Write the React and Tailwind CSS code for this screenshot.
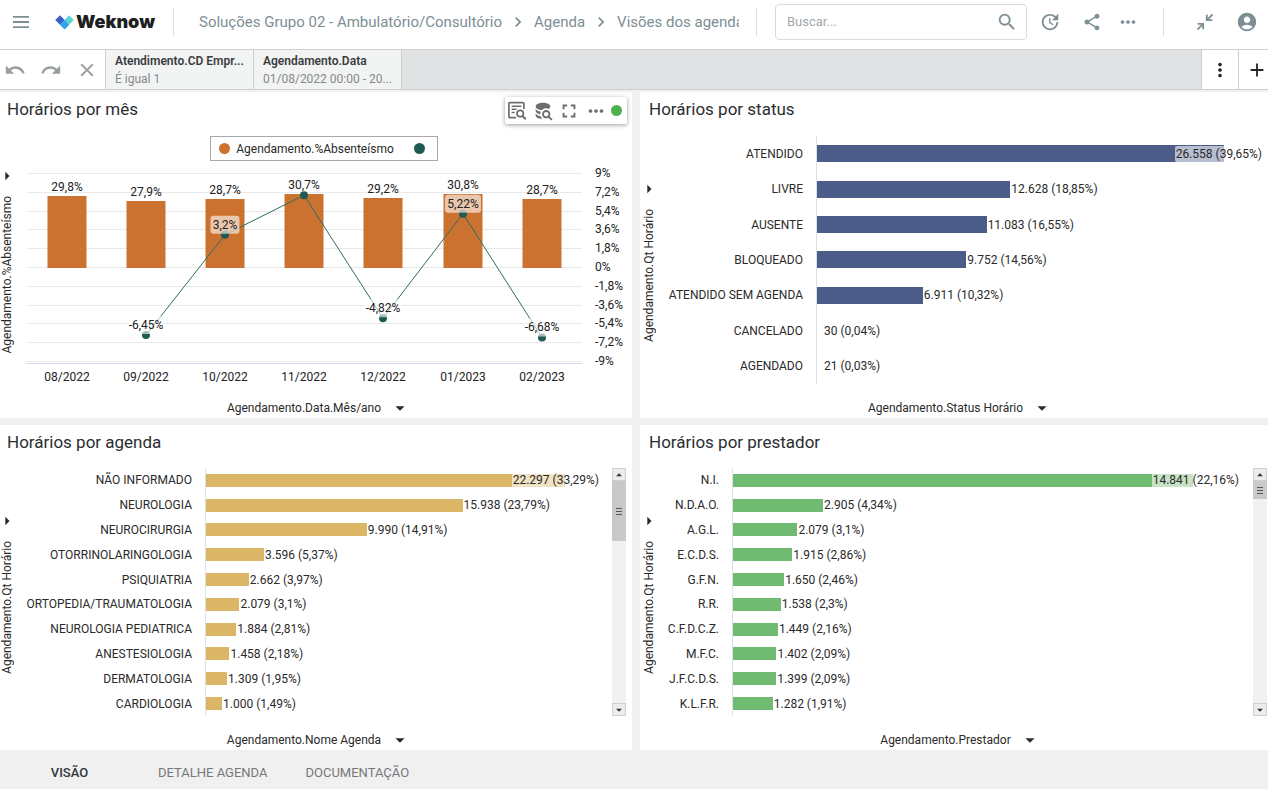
import React from "react";
import {
  MdUpdate, MdShare, MdMoreHoriz, MdMoreVert, MdSearch, MdAccountCircle,
  MdUndo, MdRedo, MdClose, MdAdd, MdFullscreen, MdKeyboardArrowRight,
  MdArrowDropDown, MdArrowDropUp,
} from "react-icons/md";

const statusRows = [
  { name: "ATENDIDO", value: 26558, label: "26.558 (39,65%)" },
  { name: "LIVRE", value: 12628, label: "12.628 (18,85%)" },
  { name: "AUSENTE", value: 11083, label: "11.083 (16,55%)" },
  { name: "BLOQUEADO", value: 9752, label: "9.752 (14,56%)" },
  { name: "ATENDIDO SEM AGENDA", value: 6911, label: "6.911 (10,32%)" },
  { name: "CANCELADO", value: 30, label: "30 (0,04%)" },
  { name: "AGENDADO", value: 21, label: "21 (0,03%)" },
];

const agendaRows = [
  { name: "NÃO INFORMADO", value: 22297, label: "22.297 (33,29%)" },
  { name: "NEUROLOGIA", value: 15938, label: "15.938 (23,79%)" },
  { name: "NEUROCIRURGIA", value: 9990, label: "9.990 (14,91%)" },
  { name: "OTORRINOLARINGOLOGIA", value: 3596, label: "3.596 (5,37%)" },
  { name: "PSIQUIATRIA", value: 2662, label: "2.662 (3,97%)" },
  { name: "ORTOPEDIA/TRAUMATOLOGIA", value: 2079, label: "2.079 (3,1%)" },
  { name: "NEUROLOGIA PEDIATRICA", value: 1884, label: "1.884 (2,81%)" },
  { name: "ANESTESIOLOGIA", value: 1458, label: "1.458 (2,18%)" },
  { name: "DERMATOLOGIA", value: 1309, label: "1.309 (1,95%)" },
  { name: "CARDIOLOGIA", value: 1000, label: "1.000 (1,49%)" },
];

const prestadorRows = [
  { name: "N.I.", value: 14841, label: "14.841 (22,16%)" },
  { name: "N.D.A.O.", value: 2905, label: "2.905 (4,34%)" },
  { name: "A.G.L.", value: 2079, label: "2.079 (3,1%)" },
  { name: "E.C.D.S.", value: 1915, label: "1.915 (2,86%)" },
  { name: "G.F.N.", value: 1650, label: "1.650 (2,46%)" },
  { name: "R.R.", value: 1538, label: "1.538 (2,3%)" },
  { name: "C.F.D.C.Z.", value: 1449, label: "1.449 (2,16%)" },
  { name: "M.F.C.", value: 1402, label: "1.402 (2,09%)" },
  { name: "J.F.C.D.S.", value: 1399, label: "1.399 (2,09%)" },
  { name: "K.L.F.R.", value: 1282, label: "1.282 (1,91%)" },
];

const months = [
  { name: "08/2022", bar: 29.8, barLabel: "29,8%" },
  { name: "09/2022", bar: 27.9, barLabel: "27,9%", line: -6.45, lineLabel: "-6,45%" },
  { name: "10/2022", bar: 28.7, barLabel: "28,7%", line: 3.2, lineLabel: "3,2%" },
  { name: "11/2022", bar: 30.7, barLabel: "30,7%", line: 7 },
  { name: "12/2022", bar: 29.2, barLabel: "29,2%", line: -4.82, lineLabel: "-4,82%" },
  { name: "01/2023", bar: 30.8, barLabel: "30,8%", line: 5.22, lineLabel: "5,22%" },
  { name: "02/2023", bar: 28.7, barLabel: "28,7%", line: -6.68, lineLabel: "-6,68%" },
];

const ticks = ["9%", "7,2%", "5,4%", "3,6%", "1,8%", "0%", "-1,8%", "-3,6%", "-5,4%", "-7,2%", "-9%"];

function Logo() {
  return (
    <a href="#inicio" className="flex items-center gap-[2px] text-[#1d1f22]" aria-label="Weknow">
      <svg viewBox="0 0 19 15" className="h-[15px] w-[19px]" aria-hidden="true">
        <path d="M5 0.3 9.6 5 5 9.7 0.2 5Z" fill="#3a5fc6" />
        <path d="M14.1 0.3 18.8 5 14.1 9.7 9.5 5Z" fill="#5ad5d6" />
        <path d="M9.6 5 14.2 9.7 9.6 14.4 5 9.7Z" fill="#2e9fe6" />
        <path d="M9.6 5 11.9 7.4 7.3 12 5 9.7Z" fill="#35a5ea" />
      </svg>
      <span className="font-['Inter',sans-serif] text-[18px] leading-6 font-black">Weknow</span>
    </a>
  );
}

function CollapseIcon() {
  return (
    <svg viewBox="0 0 24 24" className="size-[22px]" fill="currentColor" aria-hidden="true">
      <path d="M19.5 3.09 15 7.59V4h-2v7h7V9h-3.59l4.5-4.5-1.41-1.41M4 13v2h3.59l-4.5 4.5 1.41 1.41 4.5-4.5V20h2v-7H4Z" />
    </svg>
  );
}

function TableSearchIcon() {
  return (
    <svg viewBox="0 0 20 20" className="size-5" fill="none" stroke="currentColor" strokeWidth="1.7" aria-hidden="true">
      <path d="M9 16.6H2.9a1 1 0 0 1-1-1V2.6a1 1 0 0 1 1-1h13a1 1 0 0 1 1 1V8" />
      <path d="M4.6 5.2h9.8M4.6 8.3h5M4.6 11.4h3" strokeWidth="1.5" />
      <circle cx="13.2" cy="12.6" r="3.2" />
      <path d="m15.5 15 3.3 3.3" strokeWidth="2" />
    </svg>
  );
}

function DatabaseSearchIcon() {
  return (
    <svg viewBox="0 0 24 24" className="size-[22px]" fill="currentColor" aria-hidden="true">
      <path d="M18.68 12.32C16.92 10.56 14.07 10.57 12.32 12.33 10.56 14.09 10.56 16.94 12.32 18.69 13.81 20.17 16.11 20.43 17.89 19.32L21 22.39 22.39 21 19.3 17.89C20.43 16.12 20.17 13.8 18.68 12.32M17.27 17.27C16.29 18.25 14.71 18.24 13.73 17.27 12.76 16.29 12.76 14.71 13.74 13.73 14.71 12.76 16.29 12.76 17.27 13.73 18.24 14.71 18.24 16.29 17.27 17.27M10.9 20.1C10.25 19.44 9.74 18.65 9.42 17.78 6.27 17.25 4 15.76 4 14V17C4 19.21 7.58 21 12 21 11.6 20.74 11.23 20.44 10.9 20.1M4 9V12C4 13.68 6.07 15.12 9 15.7 9 15.63 9 15.57 9 15.5 9 14.57 9.2 13.65 9.58 12.81 6.34 12.3 4 10.79 4 9M12 3C7.58 3 4 4.79 4 7 4 9 7 10.68 10.85 11H10.9C12.1 9.74 13.76 9 15.5 9 16.41 9 17.31 9.19 18.14 9.56 19.17 9.09 19.87 8.12 20 7 20 4.79 16.42 3 12 3Z" />
    </svg>
  );
}

function Divider() {
  return <div className="h-7 w-px shrink-0 bg-[#dcdfe1]" />;
}

function Header() {
  return (
    <header className="flex h-[49px] items-center bg-white pb-[5px] pr-2.5 text-[#7d8e95]">
      <button type="button" aria-label="Menu" className="mr-6 ml-[11px] flex size-5 shrink-0 items-center justify-center">
        <svg viewBox="0 0 18 14" className="h-[14px] w-[18px]" fill="currentColor" aria-hidden="true">
          <path d="M1 1h16v1.8H1zM1 6.1h16v1.8H1zM1 11.2h16V13H1z" />
        </svg>
      </button>
      <Logo />
      <div className="ml-[18px]"><Divider /></div>
      <nav aria-label="Trilha" className="mr-[17px] ml-[25px] flex min-w-0 flex-1 items-center gap-1.5 overflow-hidden text-[15px] leading-5 whitespace-nowrap">
        <a href="#grupo">Soluções Grupo 02 - Ambulatório/Consultório</a>
        <MdKeyboardArrowRight className="size-5 shrink-0" aria-hidden="true" />
        <a href="#agenda">Agenda</a>
        <MdKeyboardArrowRight className="size-5 shrink-0" aria-hidden="true" />
        <a href="#visoes">Visões dos agenda</a>
      </nav>
      <Divider />
      <label className="mr-3 ml-[18px] flex h-9 w-[252px] shrink-0 items-center rounded border border-[#d9dcde] pr-2 pl-[11px]">
        <input type="text" placeholder="Buscar..." aria-label="Buscar" className="min-w-0 flex-1 text-[13px] outline-none placeholder:text-[#a2a8ab]" />
        <MdSearch className="size-[22px]" aria-hidden="true" />
      </label>
      <button type="button" aria-label="Atualizar" className="mr-[21px]"><MdUpdate className="size-[22px]" /></button>
      <button type="button" aria-label="Compartilhar" className="mr-[15px]"><MdShare className="size-5" /></button>
      <button type="button" aria-label="Mais opções" className="mr-6"><MdMoreHoriz className="size-[22px]" /></button>
      <Divider />
      <button type="button" aria-label="Recolher" className="mr-5 pl-[30px]"><CollapseIcon /></button>
      <button type="button" aria-label="Conta"><MdAccountCircle className="size-[22px]" /></button>
    </header>
  );
}

function FilterChip({ name, value }) {
  return (
    <button type="button" className="flex w-[148px] shrink-0 flex-col justify-center overflow-hidden border-r border-[#cdcfd0] bg-[#f2f3f3] pl-[9px] text-left text-xs leading-[18px] whitespace-nowrap">
      <span className="font-semibold text-[#3a3d40]">{name}</span>
      <span className="text-[#85898b]">{value}</span>
    </button>
  );
}

function FilterBar() {
  return (
    <div className="flex h-[41px] border-y border-[#cdcfd0] bg-[#dfe1e2]">
      <div className="flex w-[106px] shrink-0 items-center gap-3.5 border-r border-[#cdcfd0] bg-white pl-1 text-[#989d9f]">
        <button type="button" aria-label="Desfazer"><MdUndo className="size-[22px]" /></button>
        <button type="button" aria-label="Refazer"><MdRedo className="size-[22px]" /></button>
        <button type="button" aria-label="Limpar"><MdClose className="size-[22px]" /></button>
      </div>
      <FilterChip name="Atendimento.CD Empr..." value="É igual 1" />
      <FilterChip name="Agendamento.Data" value="01/08/2022 00:00 - 20..." />
      <div className="ml-auto flex bg-white text-[#23272a]">
        <button type="button" aria-label="Opções do filtro" className="flex w-[37px] items-center justify-center border-l border-[#cdcfd0]"><MdMoreVert className="size-[22px]" /></button>
        <button type="button" aria-label="Adicionar filtro" className="flex w-[30px] items-center border-l border-[#cdcfd0] pl-[7px]"><MdAdd className="size-[22px] shrink-0" /></button>
      </div>
    </div>
  );
}

function Panel({ title, dimension, measure, inset, lower, toolbar, children }) {
  return (
    <section className={inset ? "relative flex min-w-0 flex-col bg-white pl-[2px]" : "relative flex min-w-0 flex-col bg-white"}>
      <h2 className="flex h-[33px] items-center pl-[7px] text-[17px] leading-6 text-[#2b2e30]">{title}</h2>
      {toolbar}
      <div className={lower ? "flex min-h-0 flex-1 pt-[10px] pb-[14px]" : "flex min-h-0 flex-1 pt-[11px] pb-[14px]"}>
        <button type="button" className="mr-[2px] flex w-3.5 shrink-0 flex-col items-center justify-center gap-[10px] text-xs leading-[14px]">
          <MdArrowDropDown className="size-5 -rotate-90" aria-hidden="true" />
          <span className="rotate-180 whitespace-nowrap [writing-mode:vertical-rl]">{measure}</span>
        </button>
        {children}
      </div>
      <button type="button" className={inset ? "flex h-5 items-center justify-center gap-2 pl-[11px] text-xs leading-4" : "flex h-5 items-center justify-center gap-2 pl-1.5 text-xs leading-4"}>
        {dimension}
        <MdArrowDropDown className="size-[22px]" aria-hidden="true" />
      </button>
    </section>
  );
}

function Toolbar() {
  return (
    <div className="absolute top-[5px] right-[5px] flex h-[27px] w-[122px] items-center justify-between rounded-xs bg-white pr-[5px] pl-0.5 text-[#6b6e70] shadow-[0_1px_4px_rgba(0,0,0,0.4)]">
      <button type="button" aria-label="Ver dados"><TableSearchIcon /></button>
      <button type="button" aria-label="Consultar base"><DatabaseSearchIcon /></button>
      <button type="button" aria-label="Tela cheia"><MdFullscreen className="size-[22px]" /></button>
      <button type="button" aria-label="Mais"><MdMoreHoriz className="size-[22px]" /></button>
      <span className="size-[11px] rounded-full bg-[#4caf50]" />
    </div>
  );
}

function Scrollbar({ thumb }) {
  return (
    <div className="flex w-3.5 shrink-0 flex-col bg-[#f1f1f1] text-[#333]">
      <button type="button" aria-label="Rolar para cima" className="flex h-[13px] items-center justify-center border border-[#cfcfcf] bg-[#ececec]"><MdArrowDropUp className="size-3.5 shrink-0" /></button>
      <div className={thumb}>
        <span className="h-px w-1.5 bg-[#555]" />
        <span className="h-px w-1.5 bg-[#555]" />
        <span className="h-px w-1.5 bg-[#555]" />
      </div>
      <button type="button" aria-label="Rolar para baixo" className="mt-auto flex h-[13px] items-center justify-center border border-[#cfcfcf] bg-[#ececec]"><MdArrowDropDown className="size-3.5 shrink-0" /></button>
    </div>
  );
}

function BarChart({ rows, domain, labelClass, barClass, overlayClass }) {
  return (
    <div className="flex min-w-0 flex-1 text-xs leading-4">
      <ul className={labelClass}>
        {rows.map((r) => (
          <li key={r.name} className="flex flex-1 items-center justify-end whitespace-nowrap">{r.name}</li>
        ))}
      </ul>
      <ul className="flex min-w-0 flex-1 flex-col border-l border-[#dcdfe6]">
        {rows.map((r, i) => (
          <li key={r.name} className="relative flex flex-1 items-center whitespace-nowrap">
            {r.value >= 100 && <div className={barClass} style={{ width: `${(r.value / domain) * 100}%` }} />}
            <span className={i === 0 ? overlayClass : r.value < 100 ? "pl-[7px]" : "pl-px"}>{r.label}</span>
          </li>
        ))}
      </ul>
    </div>
  );
}

function MonthChart() {
  const zero = 107;
  const x = (i) => 51 + Math.round(i * 79.1);
  const lineY = (v) => zero - v * 10.4;
  const points = months
    .map((m, i) => (m.line === undefined ? null : `${x(i)},${lineY(m.line)}`))
    .filter(Boolean)
    .join(" ");
  return (
    <div className="flex min-w-0 flex-1 flex-col items-center">
      <div className="flex h-[25px] items-center border border-[#a9a9a9] pr-3 pl-2 text-xs leading-4">
        <span className="mr-1.5 size-[11px] rounded-full bg-[#cb7230]" />
        Agendamento.%Absenteísmo
        <span className="ml-5 size-[11px] rounded-full bg-[#1f5b53]" />
      </div>
      <svg viewBox="0 0 616 223" className="min-h-0 w-full flex-1 text-xs" fill="#222" role="img" aria-label="Horários por mês">
        {ticks.map((t, i) => (
          <g key={t}>
            <path d={`M11 ${Math.round(12 + i * 18.8) + 0.5}H566`} stroke="#e8e9eb" />
            <text x="579" y={Math.round(16 + i * 18.8)}>{t}</text>
          </g>
        ))}
        <path d="M11 202.5H566" stroke="#cfd9ea" />
        {months.map((m, i) => {
          const h = Math.round(m.bar * 2.41);
          return (
            <g key={m.name} textAnchor="middle">
              <rect x={x(i) - 19.5} y={zero - h} width="39" height={h} fill="#cb7230" />
              <text x={x(i)} y={zero - h - 5}>{m.barLabel}</text>
              <text x={x(i)} y="220">{m.name}</text>
            </g>
          );
        })}
        <polyline points={points} fill="none" stroke="#2d6d60" strokeWidth="1" />
        {months.map((m, i) =>
          m.line === undefined ? null : (
            <circle key={m.name} cx={x(i)} cy={lineY(m.line)} r="4" fill="#1f5b53" />
          )
        )}
        {months.map((m, i) => {
          if (!m.lineLabel) return null;
          const w = m.lineLabel.length > 4 ? 36 : 29;
          return (
            <g key={m.name} textAnchor="middle">
              <rect x={x(i) - w / 2} y={lineY(m.line) - 19} width={w} height="18" rx="3" fill="#fff" fillOpacity="0.6" />
              <text x={x(i)} y={Math.round(lineY(m.line) - 6)}>{m.lineLabel}</text>
            </g>
          );
        })}
      </svg>
    </div>
  );
}

export default function App() {
  return (
    <div className="flex min-h-screen flex-col bg-[#f0f0f0] font-['Roboto','Liberation_Sans',sans-serif] text-[#2a2a2a]">
      <Header />
      <FilterBar />
      <main className="grid flex-1 grid-cols-[632fr_628fr] grid-rows-[326fr_325fr] gap-x-2 gap-y-[7px] pt-[2px]">
        <Panel title="Horários por mês" dimension="Agendamento.Data.Mês/ano" measure="Agendamento.%Absenteísmo" toolbar={<Toolbar />}>
          <MonthChart />
        </Panel>
        <Panel title="Horários por status" dimension="Agendamento.Status Horário" measure="Agendamento.Qt Horário" inset>
          <BarChart
            rows={statusRows}
            domain={29465}
            labelClass="flex w-[158px] shrink-0 flex-col pr-[13px]"
            barClass="h-[17px] shrink-0 bg-[#4c5c88]"
            overlayClass="absolute right-[5px] rounded-xs bg-white/60 px-px"
          />
        </Panel>
        <Panel title="Horários por agenda" dimension="Agendamento.Nome Agenda" measure="Agendamento.Qt Horário" lower>
          <BarChart
            rows={agendaRows}
            domain={25216}
            labelClass="flex w-[189px] shrink-0 flex-col pr-[13px]"
            barClass="h-[13px] shrink-0 bg-[#dab666]"
            overlayClass="absolute right-3 bg-white/60 px-px"
          />
          <div className="mr-1.5 flex">
            <Scrollbar thumb="flex h-[60px] flex-col items-center justify-center gap-[2px] bg-[#c9c9c9]" />
          </div>
        </Panel>
        <Panel title="Horários por prestador" dimension="Agendamento.Prestador" measure="Agendamento.Qt Horário" inset lower>
          <BarChart
            rows={prestadorRows}
            domain={16777}
            labelClass="flex w-[74px] shrink-0 flex-col pr-[13px]"
            barClass="h-[13px] shrink-0 bg-[#71ba71]"
            overlayClass="absolute right-[13px] bg-white/60 px-px"
          />
          <div className="mr-px flex">
            <Scrollbar thumb="flex h-[18px] flex-col items-center justify-center gap-[2px] bg-[#c9c9c9]" />
          </div>
        </Panel>
      </main>
      <nav aria-label="Abas" className="flex h-[39px] items-center pt-1.5 text-[13px] leading-5 text-[#75787a]">
        <button type="button" className="w-[139px] font-medium text-[#33373a]">VISÃO</button>
        <button type="button" className="px-[19px]">DETALHE AGENDA</button>
        <button type="button" className="px-[19px]">DOCUMENTAÇÃO</button>
      </nav>
    </div>
  );
}
